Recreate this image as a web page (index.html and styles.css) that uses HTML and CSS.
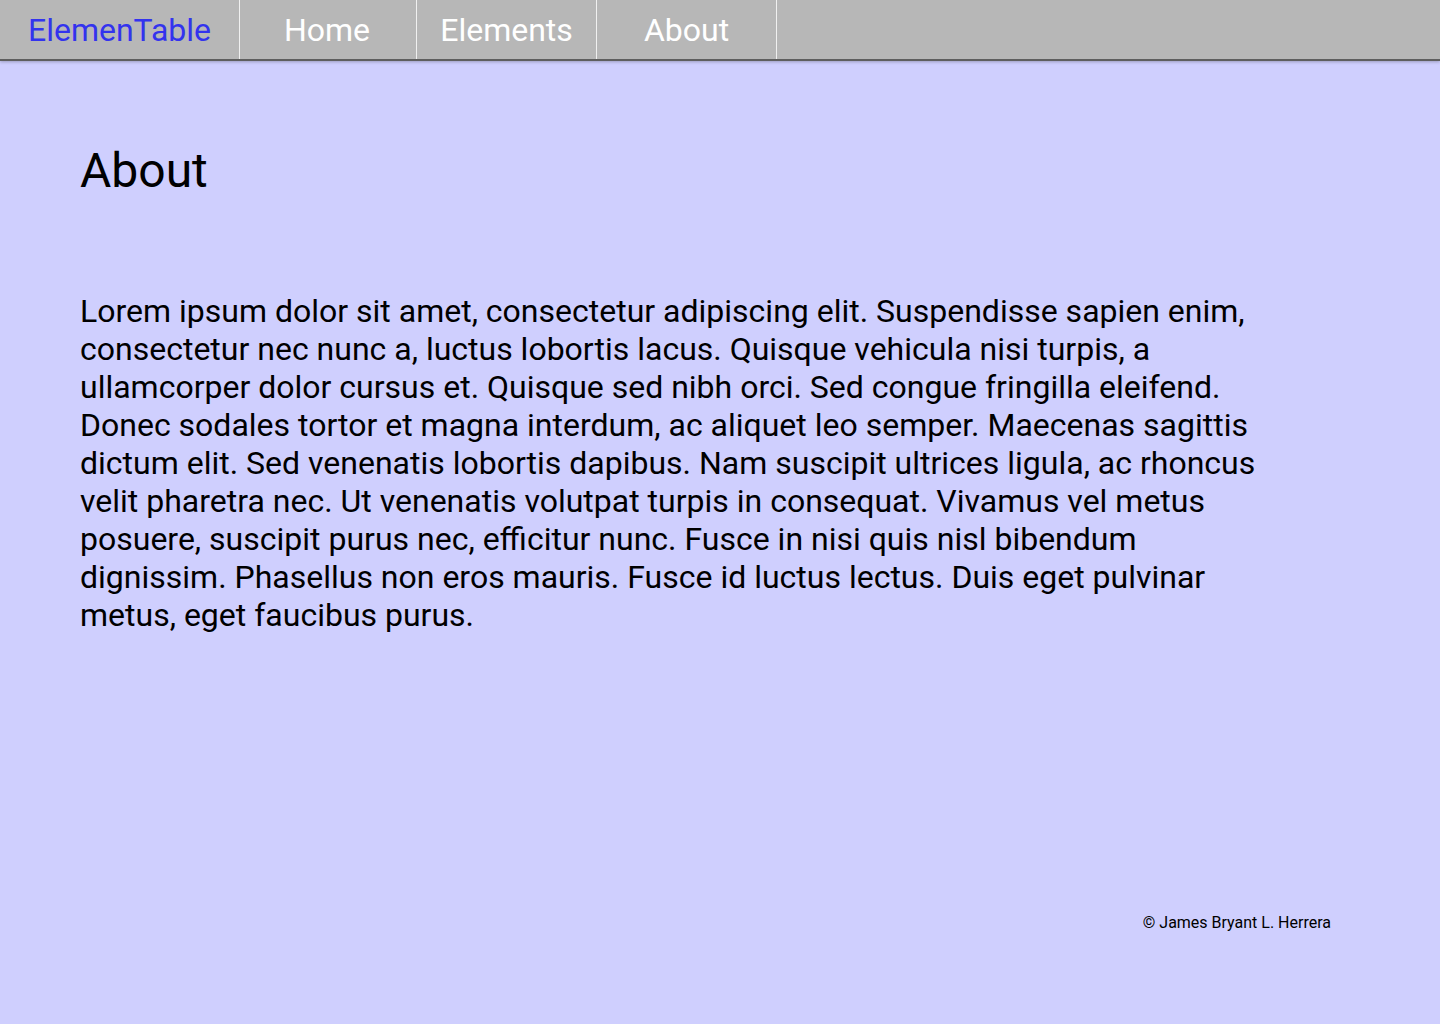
FILE: index.html
```html
<!DOCTYPE html>
<html lang="en">
<head>
<meta charset="utf-8">
<title>ElemenTable - About</title>
<link rel="stylesheet" href="styles.css">
</head>
<body>
<nav class="nav">
  <a class="nav-item brand" href="#">ElemenTable</a>
  <a class="nav-item home" href="#">Home</a>
  <a class="nav-item elements" href="#">Elements</a>
  <a class="nav-item about" href="#">About</a>
</nav>
<main class="main">
  <h1 class="title">About</h1>
  <p class="text">Lorem ipsum dolor sit amet, consectetur adipiscing elit. Suspendisse sapien enim, consectetur nec nunc a, luctus lobortis lacus. Quisque vehicula nisi turpis, a ullamcorper dolor cursus et. Quisque sed nibh orci. Sed congue fringilla eleifend. Donec sodales tortor et magna interdum, ac aliquet leo semper. Maecenas sagittis dictum elit. Sed venenatis lobortis dapibus. Nam suscipit ultrices ligula, ac rhoncus velit pharetra nec. Ut venenatis volutpat turpis in consequat. Vivamus vel metus posuere, suscipit purus nec, efficitur nunc. Fusce in nisi quis nisl bibendum dignissim. Phasellus non eros mauris. Fusce id luctus lectus. Duis eget pulvinar metus, eget faucibus purus.</p>
</main>
<footer class="footer">
  <span class="copy">© James Bryant L. Herrera</span>
</footer>
</body>
</html>
```

FILE: styles.css
```css
* { box-sizing: border-box; }
html, body { height: 100%; }
body {
  margin: 0;
  background: #cfcffe;
  font-family: Roboto, "Liberation Sans", sans-serif;
  color: #000;
  display: flex;
  flex-direction: column;
  min-height: 1024px;
}
.nav {
  display: flex;
  height: 61px;
  background: #b7b7b7;
  border-bottom: 2px solid #5e5e5e;
  box-shadow: 0 1px 3px rgba(0,0,0,0.25);
  flex-shrink: 0;
}
.nav-item {
  display: flex;
  align-items: center;
  justify-content: center;
  height: 59px;
  border-right: 1px solid #f0f0f0;
  color: #ffffff;
  text-decoration: none;
  font-size: 32px;
  padding-top: 1px;
}
.brand { width: 240px; color: #3333ee; }
.home { width: 177px; padding-right: 2px; }
.elements { width: 180px; }
.about { width: 180px; }
.main {
  flex: 1;
  padding: 82px 160px 0 80px;
}
.title {
  margin: 0;
  font-size: 48px;
  font-weight: 400;
  line-height: 56px;
}
.text {
  margin: 93px 0 0;
  font-size: 32px;
  line-height: 38px;
}
.footer {
  display: flex;
  justify-content: flex-end;
  padding: 0 109px 92px 0;
}
.copy {
  font-size: 16px;
  line-height: 18px;
}
```
